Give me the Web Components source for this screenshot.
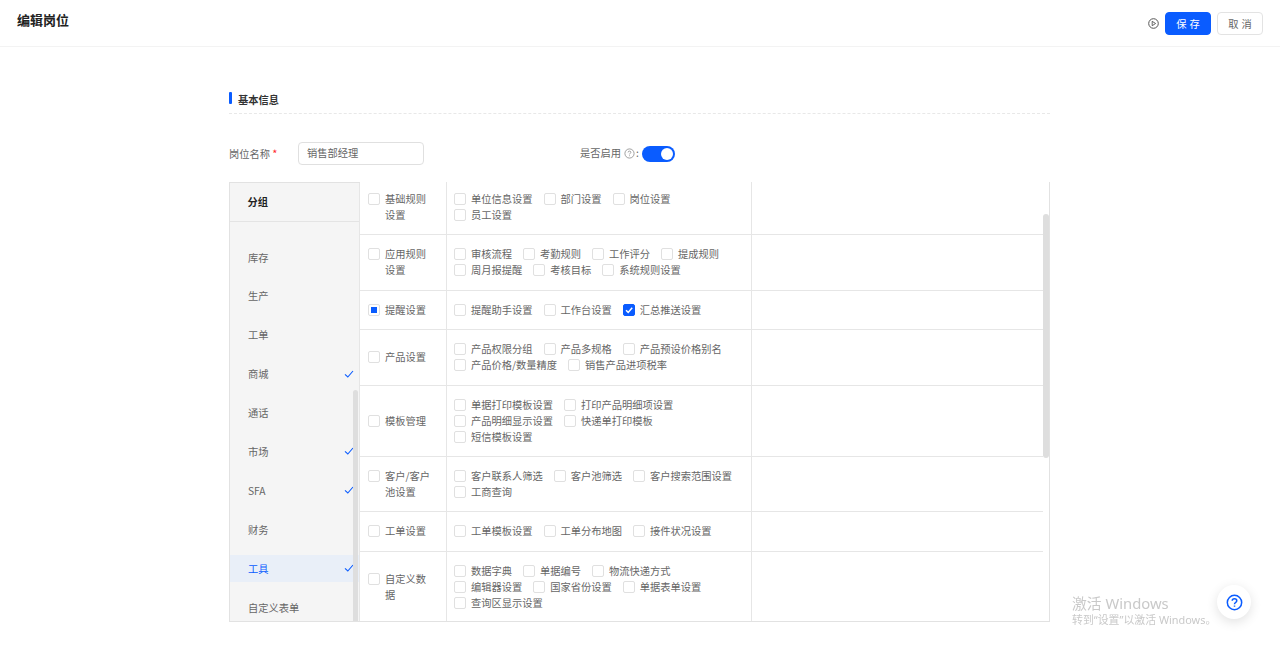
<!DOCTYPE html>
<html lang="zh"><head><meta charset="utf-8"><title>编辑岗位</title>
<style>
html,body{margin:0;padding:0;height:663px;overflow:hidden;background:#fff;font-family:"Noto Sans CJK SC","Noto Sans",sans-serif;color:#666}
</style></head><body>
<edit-page></edit-page>
<script>
const BLUE='#0a5cff';
function def(name,html,init){
  customElements.define(name,class extends HTMLElement{
    constructor(){super();this.attachShadow({mode:'open'}).innerHTML=html;}
    connectedCallback(){if(init&&!this._i){this._i=1;init.call(this,this.shadowRoot);}}
  });
}
def('perm-check',`<style>
:host{display:inline-flex;align-items:flex-start;font-size:10.25px;line-height:16px;color:#666;white-space:nowrap}
i{flex:none;box-sizing:border-box;width:12px;height:12px;margin:2px 5px 2px 0;border:1px solid #e0e0e0;border-radius:2px;background:#fff;display:flex;align-items:center;justify-content:center}
:host([state=half]) b{display:block;width:6px;height:6px;background:${BLUE}}
:host([state=on]) i{background:${BLUE};border-color:${BLUE}}
svg{display:none;width:10px;height:10px}
:host([state=on]) svg{display:block}
:host([wrap]){white-space:normal}
:host([wrap]) span{width:46px}
</style><i><b></b><svg viewBox="0 0 10 10"><path d="M2 5.2 4.2 7.4 8.2 2.8" fill="none" stroke="#fff" stroke-width="1.5"/></svg></i><span><slot></slot></span>`);

def('perm-row',`<style>
:host{display:grid;grid-template-columns:87px 305px 1fr;box-sizing:border-box;height:var(--h);border-bottom:1px solid #e6e6e6}
:host(:last-child){border-bottom:0}
.s{display:flex;align-items:center;padding-left:8px;border-right:1px solid #e6e6e6}
.i{display:flex;flex-wrap:wrap;align-content:center;gap:0 11px;padding:0 18px 0 7px;border-right:1px solid #e6e6e6}
</style><div class="s"><slot name="sub"></slot></div><div class="i"><slot></slot></div><div></div>`);

def('group-item',`<style>
:host{display:flex;flex:none;align-items:center;justify-content:space-between;height:27px;padding:0 5px 0 18px;font-size:10.25px;color:#666}
:host([active]){background:#e9eff8;color:${BLUE}}
svg{width:10px;height:10px;display:none}
:host([done]) svg{display:block}
</style><span><slot></slot></span><svg viewBox="0 0 10 10"><path d="M1 5.4 3.8 8 9 2" fill="none" stroke="${BLUE}" stroke-width="1.1"/></svg>`);

def('group-panel',`<style>
:host{display:flex;flex-direction:column;position:relative;box-sizing:border-box;width:130px;height:100%;background:#f5f5f5;border-right:1px solid #e6e6e6;overflow:hidden}
.h{flex:none;height:39px;box-sizing:border-box;border-bottom:1px solid #e4e4e4;padding-left:17.5px;font-size:10.25px;font-weight:700;line-height:37px;color:#222}
.l{display:flex;flex-direction:column;gap:11.9px;padding-top:21.5px}
.bar{position:absolute;right:1px;top:207px;bottom:0;width:5px;background:#dedede;border-radius:3px 3px 0 0}
</style><div class="h">分组</div><div class="l"><slot></slot></div><div class="bar"></div>`);

def('perm-table',`<style>
:host{display:flex;box-sizing:border-box;height:440px;border-left:1px solid #e2e2e2;border-bottom:1px solid #e2e2e2;position:relative}
.left{flex:none;border-top:1px solid #e2e2e2;height:100%;box-sizing:border-box}
.right{flex:1;box-sizing:border-box;border-right:1px solid #e2e2e2;padding-right:6px;overflow:hidden;position:relative}
.in{margin-top:-2px}
.bar{position:absolute;right:0;top:32px;width:6px;height:244px;background:#dedede;border-radius:3px}
</style><div class="left"><slot name="groups"></slot></div><div class="right"><div class="in"><slot></slot></div><div class="bar"></div></div>`);

def('section-title',`<style>
:host{display:block;height:22px;border-bottom:1px dashed #e8e8e8;font-size:10.25px;font-weight:700;color:#333;position:relative}
div{display:flex;align-items:flex-start;gap:6px;height:22px}
i{width:3px;height:12px;margin-top:1px;background:${BLUE};border-radius:1px;flex:none}
span{line-height:16px;margin-top:1px}
</style><div><i></i><span><slot></slot></span></div>`);

def('app-button',`<style>
:host{display:inline-flex;align-items:center;justify-content:center;box-sizing:border-box;width:46px;height:23px;border-radius:4px;font-size:10.25px;letter-spacing:3px;padding-left:3px;border:1px solid #e3e3e3;background:#fff;color:#666}
:host([primary]){background:${BLUE};border-color:${BLUE};color:#fff}
</style><slot></slot>`);

def('app-toggle',`<style>
:host{display:block;width:33px;height:16px;border-radius:8px;background:${BLUE};position:relative}
i{position:absolute;right:2px;top:2px;width:12px;height:12px;border-radius:50%;background:#fff}
</style><i></i>`);

def('text-field',`<style>
:host{display:flex;align-items:center;box-sizing:border-box;width:126px;height:23px;padding:0 8px 2px;border:1px solid #e0e0e0;border-radius:4px;font-size:10.25px;color:#666;background:#fff}
</style><slot></slot>`);

def('app-header',`<style>
:host{display:flex;align-items:center;justify-content:space-between;box-sizing:border-box;height:47px;padding:0 17px;border-bottom:1px solid #f3f3f3;background:#fff}
h1{margin:0 0 7px;font-size:13px;font-weight:700;color:#222;line-height:20px}
.r{display:flex;align-items:center;gap:6px}
svg{width:11px;height:11px;margin-right:0}
</style><h1><slot name="title"></slot></h1><div class="r"><svg viewBox="0 0 11 11"><circle cx="5.5" cy="5.5" r="4.8" fill="none" stroke="#555" stroke-width="1"/><path d="M4.2 3.3 7.6 5.5 4.2 7.7Z" fill="none" stroke="#555" stroke-width=".9"/></svg><slot></slot></div>`);

def('help-fab',`<style>
:host{position:fixed;left:1217px;top:585px;width:34px;height:34px;border-radius:50%;background:#fff;box-shadow:0 3px 12px rgba(0,0,0,.12);display:flex;align-items:center;justify-content:center}
svg{width:17px;height:17px}
</style><svg viewBox="0 0 18 18" fill="none" stroke="${BLUE}" stroke-width="1.6"><circle cx="9" cy="9" r="7.6"/><path d="M6.6 7.2C6.6 5.8 7.7 5 9 5s2.4.8 2.4 2.1c0 1.9-2.4 1.9-2.4 3.7"/><path d="M9 12.2v1.3"/></svg>`);

def('os-watermark',`<style>
:host{position:fixed;left:1072px;top:594px;color:#c9c9c9;pointer-events:none;white-space:nowrap;font-family:"Noto Sans","Noto Sans CJK SC",sans-serif}
div{font-size:14.8px;line-height:18px}
p{margin:0;font-size:10.9px;line-height:16px}
</style><div>激活 Windows</div><p>转到“设置”以激活 Windows。</p>`);

const ROWS=[
 ['基础规则设置',55,['单位信息设置','部门设置','岗位设置','员工设置']],
 ['应用规则设置',55.5,['审核流程','考勤规则','工作评分','提成规则','周月报提醒','考核目标','系统规则设置']],
 ['提醒设置',39.5,['提醒助手设置','工作台设置','汇总推送设置'],'half',2],
 ['产品设置',55.5,['产品权限分组','产品多规格','产品预设价格别名','产品价格/数量精度','销售产品进项税率']],
 ['模板管理',71,['单据打印模板设置','打印产品明细项设置','产品明细显示设置','快递单打印模板','短信模板设置']],
 ['客户/客户池设置',55.5,['客户联系人筛选','客户池筛选','客户搜索范围设置','工商查询']],
 ['工单设置',39.5,['工单模板设置','工单分布地图','接件状况设置']],
 ['自定义数据',71,['数据字典','单据编号','物流快递方式','编辑器设置','国家省份设置','单据表单设置','查询区显示设置']],
];
const GROUPS=[['库存'],['生产'],['工单'],['商城',1],['通话'],['市场',1],['SFA',1],['财务'],['工具',1,1],['自定义表单']];

def('edit-page',`<style>
:host{display:block;height:663px}
main{display:block;width:821px;margin-left:229px;padding-top:44px}
.f{display:flex;align-items:center;height:23px;margin:28px 0 17px;font-size:10.25px;color:#666}
.l{width:69px;flex:none;padding-bottom:2px}
.l b{color:#ff2a2a;font-weight:400;font-size:11px;margin-left:0}
.t{margin-left:156px;display:flex;align-items:center}
.t>span{padding-bottom:2px}
.t svg{width:11px;height:11px;margin:0 1px 0 3px}
.t app-toggle{margin-left:3px}
</style>
<app-header><span slot="title">编辑岗位</span><app-button primary>保存</app-button><app-button>取消</app-button></app-header>
<main>
<section-title>基本信息</section-title>
<div class="f"><span class="l">岗位名称 <b>*</b></span><text-field>销售部经理</text-field>
<span class="t"><span>是否启用</span><svg viewBox="0 0 11 11" fill="none" stroke="#888" stroke-width=".8"><circle cx="5.5" cy="5.5" r="4.6"/><path d="M4.1 4.4c0-.8.6-1.3 1.4-1.3s1.4.5 1.4 1.2c0 1-1.4 1-1.4 2.1M5.5 7.4v.8"/></svg><span>:</span><app-toggle></app-toggle></span></div>
<perm-table id="t"></perm-table>
</main>
<help-fab></help-fab><os-watermark></os-watermark>`,function(s){
  const t=s.getElementById('t');
  const g=document.createElement('group-panel');g.slot='groups';
  GROUPS.forEach(([n,d,a])=>{const e=document.createElement('group-item');e.textContent=n;if(d)e.setAttribute('done','');if(a)e.setAttribute('active','');g.append(e);});
  t.append(g);
  ROWS.forEach(([n,h,items,st,on])=>{
    const r=document.createElement('perm-row');r.style.setProperty('--h',h+'px');
    const c=document.createElement('perm-check');c.slot='sub';c.setAttribute('wrap','');c.textContent=n;if(st)c.setAttribute('state',st);r.append(c);
    items.forEach((x,i)=>{const k=document.createElement('perm-check');k.textContent=x;if(on===i)k.setAttribute('state','on');r.append(k);});
    t.append(r);
  });
});
</script>
</body></html>
